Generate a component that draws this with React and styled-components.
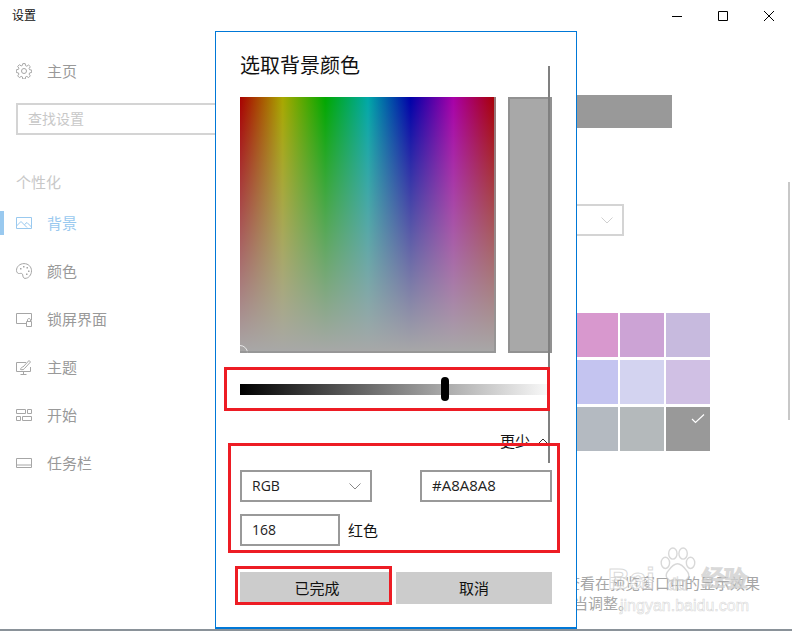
import React from 'react';
import styled, { createGlobalStyle } from 'styled-components';

const GlobalStyle = createGlobalStyle`
  html, body {
    margin: 0;
    padding: 0;
    background: #fff;
  }
  body {
    font-family: "Noto Sans CJK SC", "Open Sans", sans-serif;
  }
  * {
    box-sizing: border-box;
  }
`;

const Window = styled.div`
  position: relative;
  width: 792px;
  height: 631px;
  overflow: hidden;
  background: #fff;
  border-bottom: 2px solid #8a9299;
`;

const TitleBar = styled.div`
  display: flex;
  align-items: center;
  justify-content: space-between;
  height: 31px;
  padding-left: 12px;
  font-size: 12px;
  color: #111;
`;

const TitleText = styled.span`
  padding-bottom: 2px;
`;

const WindowButtons = styled.div`
  display: flex;
`;

const WindowButton = styled.div`
  display: flex;
  align-items: center;
  justify-content: center;
  width: 46px;
  height: 31px;
`;

const Body = styled.div`
  display: flex;
`;

const Sidebar = styled.div`
  width: 320px;
  padding-top: 16px;
  flex-shrink: 0;
`;

const NavRow = styled.div`
  position: relative;
  display: flex;
  align-items: center;
  gap: 15px;
  height: 48px;
  padding-left: 16px;
  font-size: 15px;
  color: ${p => (p.$active ? '#99c9ef' : '#999')};

  ${p =>
    p.$active &&
    `&::before {
      content: '';
      position: absolute;
      left: 0;
      top: 12px;
      width: 4px;
      height: 24px;
      background: #99c9ef;
    }`}
`;

const NavLabel = styled.span`
  padding-bottom: 2px;
`;

const NavIcon = styled.svg`
  width: 16px;
  height: 16px;
  flex-shrink: 0;
  fill: none;
  stroke: ${p => (p.$active ? '#99c9ef' : '#a6a6a6')};
  stroke-width: 1;
`;

const SearchBox = styled.div`
  display: flex;
  align-items: center;
  height: 32px;
  margin: 8px 0 0 16px;
  padding: 0 0 3px 10px;
  border: 2px solid #d4d4d4;
  font-size: 14px;
  color: #c8c8c8;
`;

const GroupLabel = styled.div`
  display: flex;
  align-items: center;
  height: 32px;
  margin-top: 32px;
  padding: 0 0 3px 16px;
  font-size: 15px;
  color: #c8c8c8;
`;

const Main = styled.div`
  flex: 1;
  padding: 64px 0 0 24px;
`;

const BackgroundPreviewBar = styled.div`
  width: 328px;
  height: 33px;
  background: #999;
`;

const FitSelect = styled.div`
  display: flex;
  align-items: center;
  justify-content: flex-end;
  width: 280px;
  height: 32px;
  margin-top: 76px;
  padding-right: 9px;
  border: 2px solid #d4d4d4;
`;

const SwatchGrid = styled.div`
  display: grid;
  grid-template-columns: repeat(3, 44px);
  grid-auto-rows: 44px;
  gap: 3px 2px;
  margin: 77px 0 0 230px;
`;

const Swatch = styled.div`
  display: flex;
  justify-content: flex-end;
  padding: 7px 5px 0 0;
  background: ${p => p.$color};
`;

const Hint = styled.div`
  margin: 122px 0 0 221px;
  font-size: 15px;
  line-height: 20px;
  color: #a6a6a6;
  white-space: nowrap;
`;

const HintSecond = styled.div`
  margin-left: -7px;
`;

const PageScrollbar = styled.div`
  position: absolute;
  left: 788px;
  top: 182px;
  width: 2px;
  height: 238px;
  background: #c8c8c8;
`;

const Dialog = styled.div`
  position: absolute;
  left: 215px;
  top: 31px;
  width: 362px;
  height: 598px;
  padding: 20px 24px 0;
  background: #fff;
  border: 1px solid #0078d7;
  border-bottom-width: 2px;
`;

const DialogTitle = styled.div`
  height: 26px;
  font-size: 20px;
  line-height: 26px;
  color: #111;
`;

const PickerRow = styled.div`
  display: flex;
  justify-content: space-between;
  margin-top: 19px;
`;

const ColorField = styled.div`
  position: relative;
  width: 256px;
  height: 256px;
  overflow: hidden;
  background:
    linear-gradient(to bottom, rgba(168, 168, 168, 0), #a8a8a8),
    linear-gradient(
      to right,
      #a80000,
      #a8a800 16.67%,
      #00a800 33.33%,
      #00a8a8 50%,
      #0000a8 66.67%,
      #a800a8 83.33%,
      #a80000
    );

  &::after {
    content: '';
    position: absolute;
    inset: 0;
    border-right: 2px solid #949494;
    border-bottom: 2px solid #949494;
    opacity: 0.8;
  }
`;

const FieldHandle = styled.div`
  position: absolute;
  left: -8px;
  bottom: -8px;
  width: 16px;
  height: 16px;
  border: 1px solid #e8e8e8;
  border-radius: 50%;
`;

const ColorPreview = styled.div`
  width: 44px;
  height: 256px;
  background: #a8a8a8;
  border: 2px solid #919191;
`;

const SliderTrack = styled.div`
  position: relative;
  width: 307px;
  height: 11px;
  margin-top: 31px;
  background: linear-gradient(to right, #000, #a8a8a8 66%, #f8f8f8);
`;

const SliderThumb = styled.div`
  position: absolute;
  left: 201px;
  top: -7px;
  width: 8px;
  height: 24px;
  border-radius: 4px;
  background: #000;
`;

const MoreRow = styled.div`
  display: flex;
  align-items: center;
  justify-content: flex-end;
  gap: 7px;
  height: 18px;
  margin-top: 37px;
  padding-right: 3px;
  font-size: 15px;
  color: #111;
`;

const MoreLabel = styled.span`
  padding-bottom: 2px;
`;

const InputRow = styled.div`
  display: flex;
  align-items: center;
  justify-content: ${p => (p.$spread ? 'space-between' : 'flex-start')};
  gap: 8px;
  margin-top: ${p => p.$top}px;
`;

const InputBox = styled.div`
  display: flex;
  align-items: center;
  justify-content: space-between;
  width: ${p => p.$width}px;
  height: 32px;
  padding: 0 9px 0 10px;
  border: 2px solid #999;
  font-family: "Open Sans", sans-serif;
  font-size: ${p => p.$size || 14}px;
  color: #222;
`;

const InputValue = styled.span`
  padding-bottom: 2px;
`;

const InputLabel = styled.span`
  padding-bottom: 2px;
  font-size: 15px;
  color: #111;
`;

const ButtonRow = styled.div`
  display: flex;
  gap: 6px;
  margin-top: 26px;
`;

const Button = styled.div`
  display: flex;
  align-items: center;
  justify-content: center;
  width: ${p => p.$width}px;
  height: 32px;
  padding: 0 0 2px ${p => p.$inset || 0}px;
  background: #ccc;
  font-size: 15px;
  color: #111;
`;

const Scrollbar = styled.div`
  position: absolute;
  left: 332px;
  top: 34px;
  width: 2px;
  height: 397px;
  background: #808080;
`;

const RedBox = styled.div`
  position: absolute;
  left: ${p => p.$x}px;
  top: ${p => p.$y}px;
  width: ${p => p.$w}px;
  height: ${p => p.$h}px;
  border: 3px solid #ed1c24;
`;

const Watermark = styled.div`
  position: absolute;
  left: 606px;
  top: 545px;
  width: 150px;
  height: 72px;
`;

const WatermarkPaw = styled.svg`
  position: absolute;
  left: 51px;
  top: 2px;
  width: 41px;
  height: 41px;
  fill: rgba(255, 255, 255, 0.6);
  stroke: rgba(190, 190, 190, 0.6);
  stroke-width: 1.5;
`;

const WatermarkLogo = styled.div`
  position: absolute;
  top: ${p => p.$top}px;
  left: ${p => p.$left}px;
  font-family: "Liberation Sans", sans-serif;
  font-size: ${p => p.$size}px;
  font-weight: 700;
  line-height: 1;
  color: rgba(255, 255, 255, 0.6);
  -webkit-text-stroke: 1px rgba(185, 185, 185, 0.55);
  white-space: nowrap;
`;

const WatermarkUrl = styled.div`
  position: absolute;
  left: 14px;
  top: 53px;
  font-family: "Liberation Sans", sans-serif;
  font-size: 16px;
  line-height: 1;
  color: rgba(255, 255, 255, 0.5);
  -webkit-text-stroke: 0.6px rgba(190, 190, 190, 0.6);
  white-space: nowrap;
`;

const GearIcon = () => (
  <NavIcon viewBox="0 0 16 16">
    <circle cx="8" cy="8" r="2.5" />
    <path d="M6.8 .6h2.4l.4 2.1 1.2.5 1.8-1.2 1.7 1.7-1.2 1.8.5 1.2 2.1.4v2.4l-2.1.4-.5 1.2 1.2 1.8-1.7 1.7-1.8-1.2-1.2.5-.4 2.1H6.8l-.4-2.1-1.2-.5-1.8 1.2-1.7-1.7 1.2-1.8-.5-1.2-2.1-.4V6.8l2.1-.4.5-1.2-1.2-1.8 1.7-1.7 1.8 1.2 1.2-.5z" />
  </NavIcon>
);

const PictureIcon = () => (
  <NavIcon $active viewBox="0 0 16 16">
    <path d="M.5 2.500h15v11H.5z" />
    <path d="M.5 11l4.500-4.500 6 6M8.500 9.500l2.500-2 4.500 4.500" />
  </NavIcon>
);

const PaletteIcon = () => (
  <NavIcon viewBox="0 0 16 16">
    <path d="M8 .6C3.800.6.500 3.600.5 7.400c0 2.200 1.500 3.400 3 3.100 1.700-.3 3-.2 3.200 1.300.2 1.700.6 3.600 2.300 3.600 3.500 0 6.500-3.400 6.500-7.600C15.500 3.700 12.300.6 8 .6z" />
    <path
      stroke="none"
      fill="#a6a6a6"
      d="M4 5h1.500v1.500H4zM7 3h1.500v1.500H7zM10.500 4H12v1.500h-1.500zM12 7.500h1.500V9H12zM10 10.500h1.500V12H10z"
    />
  </NavIcon>
);

const LockScreenIcon = () => (
  <NavIcon viewBox="0 0 16 16">
    <path d="M10 12.500H.5v-10h15v7" />
    <path d="M10.500 10.500h5v5h-5zM11.500 10.500V9c0-2 3-2 3 0v1.500" />
  </NavIcon>
);

const ThemeIcon = () => (
  <NavIcon viewBox="0 0 16 16">
    <path d="M10 3.500H.5v9h14V8M7.500 12.500v3M4.500 15.500h6" />
    <path d="M4.500 10.500c.5-2 1.500-2.500 2.500-2.500L13 1.500l1.500 1.500L8.500 9.500c-.5 1-2 1.500-4 1z" />
  </NavIcon>
);

const StartIcon = () => (
  <NavIcon viewBox="0 0 16 16">
    <path d="M.5 2.500h9v4h-9zM11.500 2.500h4v4h-4zM.5 9.500h4v4h-4zM6.500 9.500h9v4h-9z" />
  </NavIcon>
);

const TaskbarIcon = () => (
  <NavIcon viewBox="0 0 16 16">
    <path d="M.5 3.500h15v9H.5zM.5 10h15" />
  </NavIcon>
);

const Chevron = ({ up, color }) => (
  <svg width="12" height="7" viewBox="0 0 12 7" fill="none" stroke={color} strokeWidth="1">
    <path d={up ? 'M.5 6.500 6 1l5.500 5.500' : 'M.5.5 6 6 11.500.5'} />
  </svg>
);

const navItems = [
  { label: '背景', Icon: PictureIcon, active: true },
  { label: '颜色', Icon: PaletteIcon },
  { label: '锁屏界面', Icon: LockScreenIcon },
  { label: '主题', Icon: ThemeIcon },
  { label: '开始', Icon: StartIcon },
  { label: '任务栏', Icon: TaskbarIcon }
];

// prettier-ignore
const swatches = ['#d898ce', '#cca3d5', '#c7bade', '#c4c4f0', '#d3d3f0', '#d0c0e4', '#b4bac1', '#b4b9bb', '#999999'];

export default function App() {
  return (
    <>
      <GlobalStyle />
      <Window>
        <TitleBar>
          <TitleText>设置</TitleText>
          <WindowButtons>
            <WindowButton>
              <svg width="10" height="10" viewBox="0 0 10 10" stroke="#000" fill="none">
                <path d="M0 5.500h10" />
              </svg>
            </WindowButton>
            <WindowButton>
              <svg width="10" height="10" viewBox="0 0 10 10" stroke="#000" fill="none">
                <path d="M.5.5h9v9h-9z" />
              </svg>
            </WindowButton>
            <WindowButton>
              <svg width="10" height="10" viewBox="0 0 10 10" stroke="#000" fill="none">
                <path d="M0 0l10 10M10 0L0 10" />
              </svg>
            </WindowButton>
          </WindowButtons>
        </TitleBar>
        <Body>
          <Sidebar>
            <NavRow>
              <GearIcon />
              <NavLabel>主页</NavLabel>
            </NavRow>
            <SearchBox>查找设置</SearchBox>
            <GroupLabel>个性化</GroupLabel>
            {navItems.map(({ label, Icon, active }) => (
              <NavRow key={label} $active={active}>
                <Icon />
                <NavLabel>{label}</NavLabel>
              </NavRow>
            ))}
          </Sidebar>
          <Main>
            <BackgroundPreviewBar />
            <FitSelect>
              <Chevron color="#d0d0d0" />
            </FitSelect>
            <SwatchGrid>
              {swatches.map((color, i) => (
                <Swatch key={i} $color={color}>
                  {i === swatches.length - 1 && (
                    <svg width="14" height="10" viewBox="0 0 14 10" fill="none" stroke="#fff" strokeWidth="1.2">
                      <path d="M1 5l3.500 3.500L13 .5" />
                    </svg>
                  )}
                </Swatch>
              ))}
            </SwatchGrid>
            <Hint>
              查看在预览窗口中的显示效果
              <HintSecond>适当调整。</HintSecond>
            </Hint>
          </Main>
        </Body>
        <PageScrollbar />
        <Dialog>
          <DialogTitle>选取背景颜色</DialogTitle>
          <PickerRow>
            <ColorField>
              <FieldHandle />
            </ColorField>
            <ColorPreview />
          </PickerRow>
          <SliderTrack>
            <SliderThumb />
          </SliderTrack>
          <MoreRow>
            <MoreLabel>更少</MoreLabel>
            <Chevron up color="#333" />
          </MoreRow>
          <InputRow $spread $top={20}>
            <InputBox $width={132}>
              <InputValue>RGB</InputValue>
              <Chevron color="#888" />
            </InputBox>
            <InputBox $width={132} $size={15}>
              <InputValue>#A8A8A8</InputValue>
            </InputBox>
          </InputRow>
          <InputRow $top={12}>
            <InputBox $width={100}>
              <InputValue>168</InputValue>
            </InputBox>
            <InputLabel>红色</InputLabel>
          </InputRow>
          <ButtonRow>
            <Button $width={150} $inset={4}>
              已完成
            </Button>
            <Button $width={156}>取消</Button>
          </ButtonRow>
          <Scrollbar />
          <RedBox $x={8} $y={335} $w={326} $h={44} />
          <RedBox $x={12} $y={411} $w={332} $h={110} />
          <RedBox $x={19} $y={534} $w={157} $h={39} />
        </Dialog>
        <Watermark>
          <WatermarkPaw viewBox="0 0 44 44">
            <ellipse cx="9" cy="17" rx="4.500" ry="6" />
            <ellipse cx="17" cy="7" rx="4.500" ry="6" />
            <ellipse cx="28" cy="7" rx="4.500" ry="6" />
            <ellipse cx="36" cy="17" rx="4.500" ry="6" />
            <path d="M22 18c5 0 8 5 11 9 3 5-1 10-6 9-3-.6-7-.6-10 0-5 1-9-4-6-9 3-4 6-9 11-9z" />
          </WatermarkPaw>
          <WatermarkLogo $left={2} $top={19} $size={30}>
            Bai
          </WatermarkLogo>
          <WatermarkLogo $left={61} $top={32} $size={16}>
            du
          </WatermarkLogo>
          <WatermarkLogo $left={96} $top={22} $size={23}>
            经验
          </WatermarkLogo>
          <WatermarkUrl>jingyan.baidu.com</WatermarkUrl>
        </Watermark>
      </Window>
    </>
  );
}
